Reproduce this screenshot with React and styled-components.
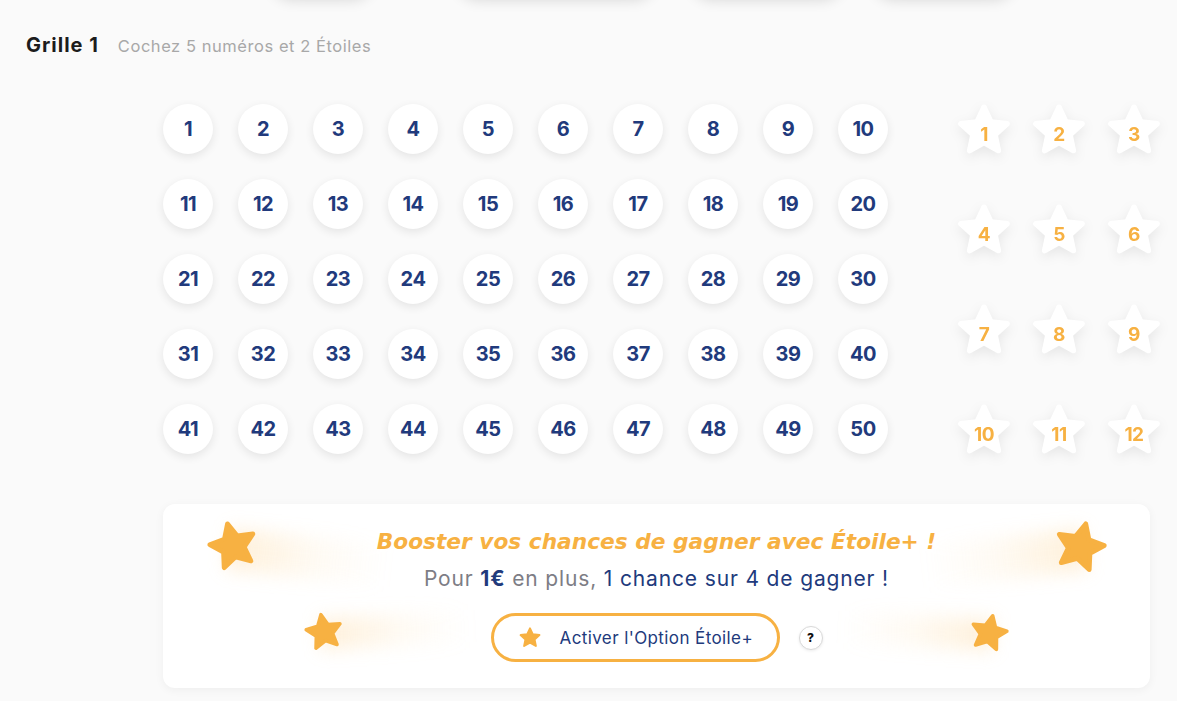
import React from "react";
import styled, { createGlobalStyle } from "styled-components";

const GlobalStyle = createGlobalStyle`
  html, body { margin: 0; padding: 0; }
  body {
    background: #fafafa;
    font-family: "Inter", "Noto Sans", sans-serif;
    overflow: hidden;
  }
`;

const NAVY = "#213a7c";
const ORANGE = "#f7b142";

const Page = styled.div`
  width: 1177px;
  height: 701px;
  position: relative;
  overflow: hidden;
`;

const TopTabs = styled.div`
  display: flex;
  height: 0;
  padding-left: 272px;
`;

const Tab = styled.div`
  flex: none;
  width: ${(p) => p.$w}px;
  margin-left: ${(p) => p.$ml}px;
  height: 40px;
  margin-top: -44px;
  border-radius: 20px;
  background: #fff;
  box-shadow: 0 4px 14px rgba(0, 0, 0, 0.14);
`;

const Header = styled.div`
  display: flex;
  align-items: baseline;
  gap: 19px;
  padding: 32px 0 0 26px;
`;

const Title = styled.h2`
  margin: 0;
  font-size: 20px;
  font-weight: 700;
  color: #1c1c1c;
  letter-spacing: 1px;
  line-height: 26px;
`;

const Hint = styled.span`
  font-size: 16.5px;
  font-weight: 400;
  color: #a8a8a8;
  letter-spacing: 0.55px;
`;

const Board = styled.div`
  display: flex;
  align-items: flex-start;
  gap: 71px;
  padding-left: 163px;
  margin-top: 46px;
`;

const NumberGrid = styled.div`
  display: grid;
  grid-template-columns: repeat(10, 50px);
  grid-auto-rows: 50px;
  gap: 25px;
`;

const Ball = styled.button`
  width: 50px;
  height: 50px;
  border-radius: 50%;
  border: none;
  padding: 0;
  background: #fff;
  box-shadow: 0 3px 10px rgba(0, 0, 0, 0.09);
  font-family: "Inter", sans-serif;
  font-size: 20px;
  font-weight: 700;
  color: ${NAVY};
  letter-spacing: -0.5px;
  display: flex;
  align-items: center;
  justify-content: center;
`;

const StarGrid = styled.div`
  display: grid;
  grid-template-columns: repeat(3, 50px);
  grid-auto-rows: 50px;
  column-gap: 25px;
  row-gap: 50px;
  margin-top: 2px;
`;

const StarCell = styled.div`
  position: relative;
  width: 50px;
  height: 50px;
  display: flex;
  align-items: center;
  justify-content: center;
  filter: drop-shadow(0 4px 6px rgba(0, 0, 0, 0.08));
`;

const StarBg = styled.svg`
  position: absolute;
  inset: 0;
  width: 54px;
  height: 54px;
  left: -2px;
  top: -2px;
`;

const StarNum = styled.span`
  position: relative;
  font-size: 19px;
  font-weight: 700;
  color: ${ORANGE};
  margin-top: 6px;
  letter-spacing: -0.5px;
`;

const Card = styled.div`
  position: relative;
  width: 987px;
  height: 184px;
  margin: 48px 0 0 163px;
  background: #fff;
  border-radius: 12px;
  box-shadow: 0 2px 10px rgba(0, 0, 0, 0.05);
  display: flex;
  flex-direction: column;
  align-items: center;
  box-sizing: border-box;
  padding-top: 24px;
  overflow: hidden;
`;

const Promo = styled.div`
  position: relative;
  font-family: "DejaVu Sans", "Open Sans", sans-serif;
  font-style: italic;
  font-weight: 700;
  font-size: 21.7px;
  line-height: 28px;
  color: ${ORANGE};
`;

const Offer = styled.div`
  position: relative;
  margin-top: 10px;
  font-size: 21px;
  line-height: 26px;
  letter-spacing: 0.85px;
  color: #7d7d85;
  font-weight: 400;
  b { color: ${NAVY}; font-weight: 700; }
  span { color: ${NAVY}; }
`;

const ActionRow = styled.div`
  position: relative;
  display: flex;
  align-items: center;
  gap: 19px;
  margin-top: 21px;
`;

const OptionButton = styled.button`
  width: 289px;
  height: 49px;
  box-sizing: border-box;
  border: 3px solid ${ORANGE};
  border-radius: 25px;
  background: #fff;
  display: flex;
  align-items: center;
  gap: 19px;
  padding: 0 0 0 25px;
  font-family: "Inter", sans-serif;
  font-size: 17px;
  letter-spacing: 0.4px;
  color: ${NAVY};
  cursor: pointer;
`;

const Help = styled.button`
  width: 24px;
  height: 24px;
  border-radius: 50%;
  border: 1px solid #d9d9d9;
  background: #fff;
  padding: 0;
  box-shadow: 0 1px 3px rgba(0, 0, 0, 0.08);
  font-family: "Inter", sans-serif;
  font-size: 12px;
  font-weight: 800;
  color: #111;
  display: flex;
  align-items: center;
  justify-content: center;
`;

const Shooting = styled.div`
  position: absolute;
  left: ${(p) => p.$x}px;
  top: ${(p) => p.$y}px;
  width: ${(p) => p.$size}px;
  height: ${(p) => p.$size}px;
`;

const Trail = styled.div`
  position: absolute;
  top: 15%;
  height: 80%;
  width: ${(p) => p.$len}px;
  ${(p) => (p.$dir === "right" ? "left: 40%;" : "right: 40%;")}
  background: linear-gradient(
    ${(p) => (p.$dir === "right" ? "to right" : "to left")},
    rgba(252, 196, 110, 0.26),
    rgba(252, 210, 140, 0.1) 55%,
    rgba(255, 230, 190, 0)
  );
  filter: blur(9px);
  transform: rotate(${(p) => p.$tilt}deg);
  transform-origin: ${(p) => (p.$dir === "right" ? "left center" : "right center")};
`;

const StarSvg = styled.svg`
  position: relative;
  width: 100%;
  height: 100%;
  transform: rotate(${(p) => p.$rot || 0}deg);
`;

const STAR_POINTS =
  "50,6 62.9,33.2 92.8,36.6 70.6,56.9 76.6,86.4 50,71.6 23.4,86.4 29.4,56.9 7.2,36.6 37.1,33.2";

function Star({ color, rot }) {
  return (
    <StarSvg viewBox="0 0 100 100" $rot={rot}>
      <polygon
        points={STAR_POINTS}
        fill={color}
        stroke={color}
        strokeWidth="9"
        strokeLinejoin="round"
      />
    </StarSvg>
  );
}

function ShootingStar({ x, y, size, dir, len, tilt, rot }) {
  return (
    <Shooting $x={x} $y={y} $size={size}>
      <Trail $dir={dir} $len={len} $tilt={tilt} />
      <Star color={ORANGE} rot={rot} />
    </Shooting>
  );
}

const SmallStar = styled.span`
  width: 22px;
  height: 22px;
  display: inline-flex;
`;

export default function App() {
  const numbers = Array.from({ length: 50 }, (_, i) => i + 1);
  const stars = Array.from({ length: 12 }, (_, i) => i + 1);
  return (
    <Page>
      <GlobalStyle />
      <TopTabs>
        <Tab $w={100} $ml={0} />
        <Tab $w={196} $ml={86} />
        <Tab $w={150} $ml={38} />
        <Tab $w={140} $ml={32} />
      </TopTabs>
      <Header>
        <Title>Grille 1</Title>
        <Hint>Cochez 5 numéros et 2 Étoiles</Hint>
      </Header>
      <Board>
        <NumberGrid>
          {numbers.map((n) => (
            <Ball key={n}>{n}</Ball>
          ))}
        </NumberGrid>
        <StarGrid>
          {stars.map((n) => (
            <StarCell key={n}>
              <StarBg viewBox="0 0 100 100">
                <polygon
                  points={STAR_POINTS}
                  fill="#fff"
                  stroke="#fff"
                  strokeWidth="10"
                  strokeLinejoin="round"
                />
              </StarBg>
              <StarNum>{n}</StarNum>
            </StarCell>
          ))}
        </StarGrid>
      </Board>
      <Card>
        <ShootingStar x={44} y={16} size={52} dir="right" len={160} tilt={6} rot={-14} />
        <ShootingStar x={141} y={108} size={40} dir="right" len={150} tilt={-3} rot={-10} />
        <ShootingStar x={890} y={16} size={54} dir="left" len={160} tilt={-6} rot={14} />
        <ShootingStar x={806} y={109} size={40} dir="left" len={150} tilt={3} rot={12} />
        <Promo>Booster vos chances de gagner avec Étoile+ !</Promo>
        <Offer>
          Pour <b>1€</b> en plus, <span>1 chance sur 4 de gagner !</span>
        </Offer>
        <ActionRow>
          <OptionButton>
            <SmallStar>
              <Star color={ORANGE} />
            </SmallStar>
            Activer l'Option Étoile+
          </OptionButton>
          <Help>?</Help>
        </ActionRow>
      </Card>
    </Page>
  );
}
